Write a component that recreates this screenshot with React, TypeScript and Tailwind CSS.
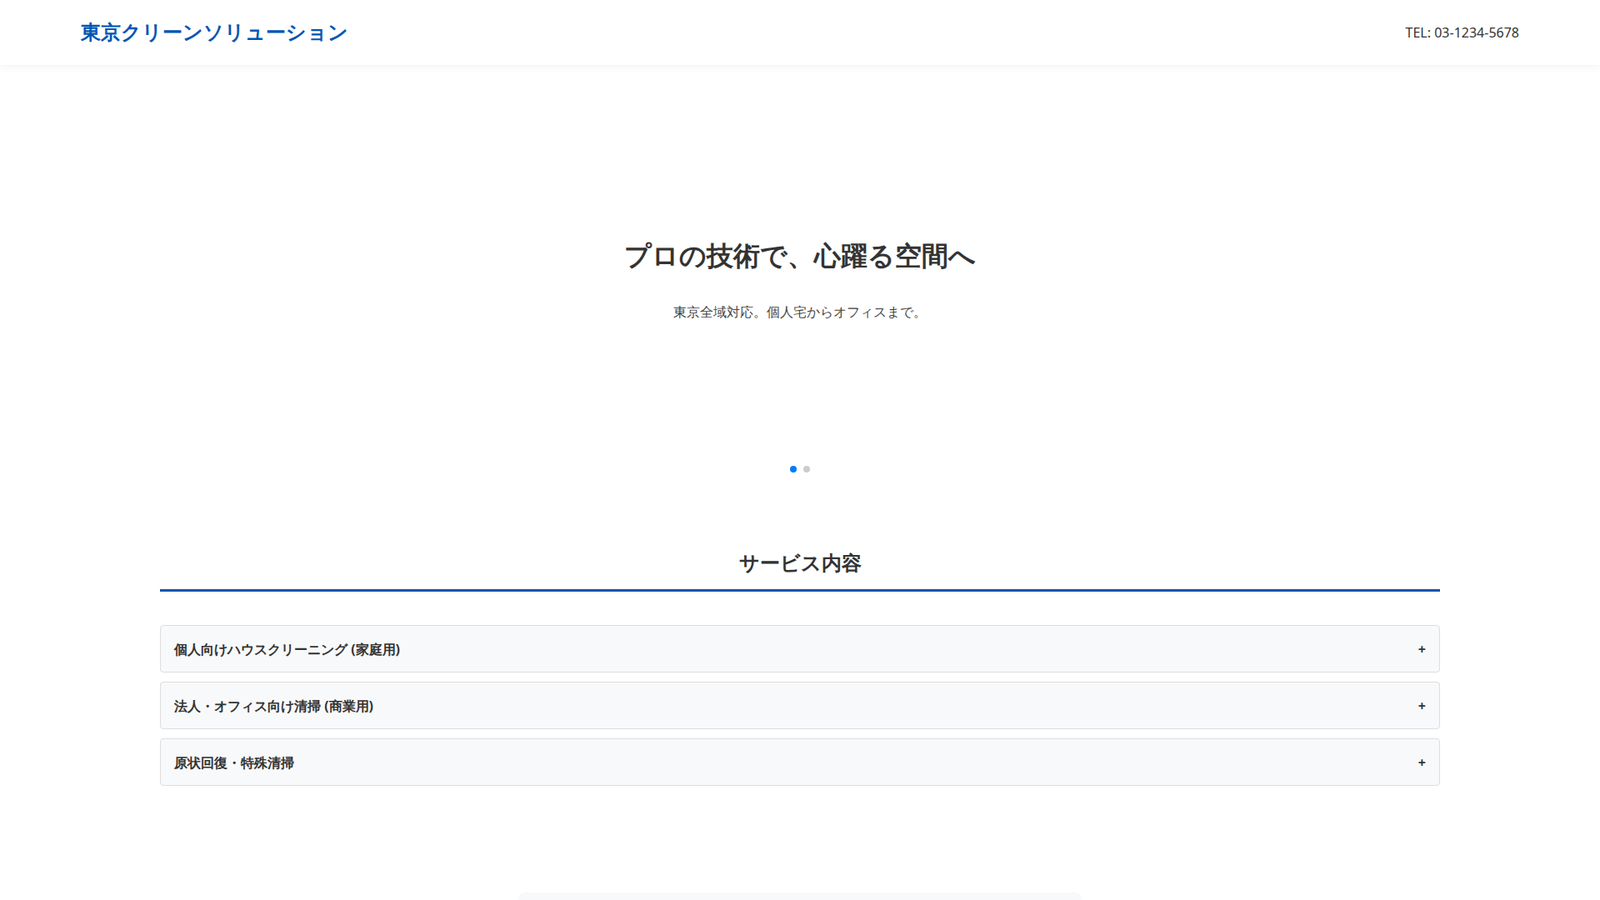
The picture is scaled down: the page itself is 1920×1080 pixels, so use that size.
export default function App() {
  const services = ['個人向けハウスクリーニング (家庭用)', '法人・オフィス向け清掃 (商業用)', '原状回復・特殊清掃'];
  return (
    <div className="min-h-screen bg-white text-[#333] font-['Liberation_Sans','Noto_Sans_CJK_JP',sans-serif]">
      <header className="h-[78px] flex items-center justify-between px-[97px] bg-white shadow-[0_2px_10px_rgba(0,0,0,0.06)] relative">
        <h1 className="text-[23.5px] font-bold text-[#0056b3]">東京クリーンソリューション</h1>
        <span className="text-[16px] text-[#333]">TEL: 03-1234-5678</span>
      </header>
      <section className="h-[522px] flex flex-col items-center">
        <h2 className="mt-[212px] text-[32px] font-bold leading-none">プロの技術で、心躍る空間へ</h2>
        <p className="mt-[40px] text-[16px] text-[#444]">東京全域対応。個人宅からオフィスまで。</p>
        <div className="mt-[173px] flex gap-[8px]">
          <span className="w-[8px] h-[8px] rounded-full bg-[#007bff]" />
          <span className="w-[8px] h-[8px] rounded-full bg-[#ccc]" />
        </div>
      </section>
      <section className="w-[1536px] mx-auto pt-[63px]">
        <h2 className="text-center text-[24px] font-bold leading-none pb-[20px] border-b-[3px] border-[#0056b3]">サービス内容</h2>
        <div className="mt-[40px] flex flex-col gap-[11px]">
          {services.map((s) => (
            <div key={s} className="h-[57px] flex items-center justify-between px-[16px] bg-[#f8f9fa] border border-[#ddd] rounded-[4px]">
              <span className="text-[16px] font-bold">{s}</span>
              <span className="text-[16px] font-bold">+</span>
            </div>
          ))}
        </div>
      </section>
      <div className="w-[676px] h-[200px] mx-auto mt-[128px] bg-[#f8f9fa] rounded-[8px]" />
    </div>
  );
}
